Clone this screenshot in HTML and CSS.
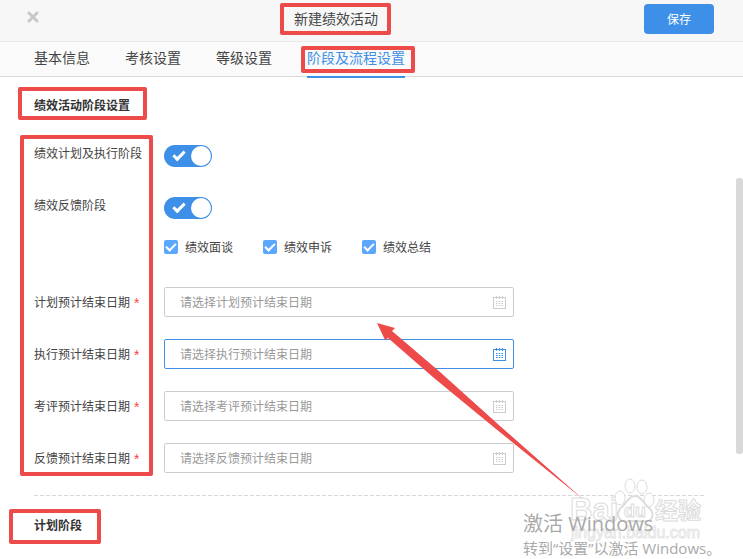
FILE: index.html
```html
<!DOCTYPE html>
<html lang="zh-CN">
<head>
  <meta charset="UTF-8">
  <meta name="viewport" content="width=device-width, initial-scale=1.0">
  <title>新建绩效活动</title>
  <link rel="stylesheet" href="styles.css">
</head>
<body>

  <header class="topbar">
    <button type="button" class="close-btn" aria-label="关闭">
      <svg width="12" height="12" viewBox="0 0 12 12"><path d="M2 2l8 8M10 2l-8 8" fill="none" stroke="#c8c8c8" stroke-width="3" stroke-linecap="round"/></svg>
    </button>
    <h1 class="page-title">新建绩效活动</h1>
    <button type="button" class="save-btn">保存</button>
  </header>

  <nav class="tabs">
    <a href="#" class="tab">基本信息</a>
    <a href="#" class="tab">考核设置</a>
    <a href="#" class="tab">等级设置</a>
    <a href="#" class="tab active">阶段及流程设置</a>
  </nav>

  <main class="content">
    <h2 class="section-title">绩效活动阶段设置</h2>

    <form class="stage-form">
      <!-- Stage switches -->
      <div class="row">
        <label class="row-label switch-label" for="plan-switch">绩效计划及执行阶段</label>
        <div class="switch-box"><input type="checkbox" id="plan-switch" class="switch" checked></div>
      </div>
      <div class="row row-feedback">
        <label class="row-label switch-label" for="feedback-switch">绩效反馈阶段</label>
        <div>
          <div class="switch-box"><input type="checkbox" id="feedback-switch" class="switch" checked></div>
          <div class="checks">
            <label class="check-item"><input type="checkbox" class="check" checked>绩效面谈</label>
            <label class="check-item"><input type="checkbox" class="check" checked>绩效申诉</label>
            <label class="check-item"><input type="checkbox" class="check" checked>绩效总结</label>
          </div>
        </div>
      </div>

      <!-- Date fields -->
      <div class="row">
        <label class="row-label" for="plan-date">计划预计结束日期<span class="required">*</span></label>
        <div class="date-box">
          <input type="text" id="plan-date" class="date-input" placeholder="请选择计划预计结束日期">
          <svg class="calendar" width="13" height="13"><use href="#calendar"/></svg>
        </div>
      </div>
      <div class="row">
        <label class="row-label" for="run-date">执行预计结束日期<span class="required">*</span></label>
        <div class="date-box current">
          <input type="text" id="run-date" class="date-input" placeholder="请选择执行预计结束日期">
          <svg class="calendar" width="13" height="13"><use href="#calendar"/></svg>
        </div>
      </div>
      <div class="row">
        <label class="row-label" for="review-date">考评预计结束日期<span class="required">*</span></label>
        <div class="date-box">
          <input type="text" id="review-date" class="date-input" placeholder="请选择考评预计结束日期">
          <svg class="calendar" width="13" height="13"><use href="#calendar"/></svg>
        </div>
      </div>
      <div class="row">
        <label class="row-label" for="back-date">反馈预计结束日期<span class="required">*</span></label>
        <div class="date-box">
          <input type="text" id="back-date" class="date-input" placeholder="请选择反馈预计结束日期">
          <svg class="calendar" width="13" height="13"><use href="#calendar"/></svg>
        </div>
      </div>
    </form>

    <hr class="divider">
    <h2 class="section-title">计划阶段</h2>
  </main>

  <div class="scroll-thumb"></div>

  <!-- Site watermark -->
  <svg class="watermark" width="140" height="70" viewBox="0 0 140 70">
    <g fill="#fff" stroke="#dcdcdc" stroke-width="1">
      <text x="1" y="42" class="wm-bai">Bai</text>
      <ellipse cx="51" cy="20" rx="5" ry="7"/>
      <ellipse cx="61" cy="8" rx="5" ry="7"/>
      <ellipse cx="73" cy="9" rx="5" ry="7"/>
      <ellipse cx="80" cy="22" rx="5" ry="7"/>
      <path d="M66 18c6 0 8 6 12 10 5 4 7 9 4 13-3 4-10 2-16 2s-12 2-15-2c-4-4-2-9 3-13 4-4 6-10 12-10z" stroke-width="2"/>
      <text x="55" y="39" class="wm-du">du</text>
      <text x="86" y="41" class="wm-cn">经验</text>
      <text x="2" y="60" class="wm-url">jingyan.baidu.com</text>
    </g>
  </svg>

  <!-- System activation notice -->
  <div class="activation">
    <p class="activation-title">激活 Windows</p>
    <p class="activation-text">转到“设置”以激活 Windows。</p>
  </div>

  <!-- Red marks -->
  <svg class="marks" width="743" height="559" viewBox="0 0 743 559">
    <g fill="none" stroke="#ed4a4a" stroke-width="4" stroke-linejoin="round">
      <rect x="282" y="5" width="107" height="28"/>
      <rect x="303" y="48" width="110" height="23"/>
      <rect x="20" y="89" width="125" height="29"/>
      <rect x="22" y="137" width="129" height="337"/>
      <rect x="11" y="511" width="88" height="31"/>
    </g>
    <path d="M377 323L395 328 392 331 440 372 500 426 584 500 496 429 434 378 388 338 385 340z" fill="#ed4a4a"/>
  </svg>

  <svg class="sprite" width="0" height="0">
    <symbol id="calendar" viewBox="0 0 13 13">
      <path d="M0 1h13v12H0zM1 2v10h11V2z" fill="currentColor" fill-rule="evenodd"/>
      <path d="M3 0h1v3H3zM6 0h1v3H6zM9 0h1v3H9z" fill="currentColor"/>
      <path d="M3 5.500h7M3 7.500h7M3 9.500h7" fill="none" stroke="currentColor" stroke-dasharray="1.600 1.100"/>
    </symbol>
  </svg>

</body>
</html>
```
FILE: styles.css
```css
*, *::before, *::after {
  box-sizing: border-box;
}

body {
  position: relative;
  min-height: 100vh;
  margin: 0;
  overflow: hidden;
  background: #fff;
  color: #444;
  font-family: "Noto Sans CJK SC", sans-serif;
  font-size: 12px;
  line-height: 20px;
}

button, input {
  font: inherit;
}

/* Header */
.topbar {
  display: flex;
  align-items: flex-start;
  height: 42px;
  padding: 4px 29px 0 27px;
  background: #f7f7f7;
  border-bottom: 1px solid #e8e8e8;
}

.close-btn {
  display: flex;
  padding: 7px 0;
  border: none;
  background: none;
  cursor: pointer;
}

.page-title {
  flex: 1;
  margin: 0;
  font-size: 14px;
  font-weight: 400;
  line-height: 28px;
  text-align: center;
}

.save-btn {
  width: 70px;
  height: 30px;
  margin-left: 11px;
  padding: 0;
  border: none;
  border-radius: 4px;
  background: #3d8fe8;
  color: #fff;
  cursor: pointer;
}

/* Tabs */
.tabs {
  display: flex;
  gap: 35px;
  height: 35px;
  padding: 0 34px;
  background: #fafafa;
  border-bottom: 1px solid #d9d9d9;
}

.tab {
  height: 36px;
  color: #444;
  font-size: 14px;
  line-height: 30px;
  text-decoration: none;
}

.tab.active {
  color: #3d8fe8;
  border-bottom: 2px solid #3d8fe8;
}

/* Form */
.content {
  padding: 18px 39px 24px 34px;
}

.section-title {
  margin: 0;
  color: #333;
  font-size: 12px;
  font-weight: 700;
  line-height: 20px;
}

.stage-form {
  display: flex;
  flex-direction: column;
  gap: 22px;
  margin: 26px 0 22px;
}

.row {
  display: flex;
  align-items: flex-start;
}

.row-feedback {
  padding-bottom: 8px;
}

.row-label {
  width: 130px;
  line-height: 30px;
}

.switch-label {
  line-height: 24px;
}

.required {
  margin-left: 4px;
  color: #f44;
  font-family: "Liberation Sans", sans-serif;
  font-size: 14px;
  line-height: 20px;
  vertical-align: -1px;
}

.switch-box {
  display: flex;
  align-items: center;
  height: 30px;
}

.switch {
  position: relative;
  width: 48px;
  height: 22px;
  margin: 0;
  appearance: none;
  border-radius: 11px;
  background: #ccc;
  cursor: pointer;
}

.switch:checked {
  background: #3d8fe8;
}

.switch::before {
  content: "";
  position: absolute;
  top: 1px;
  right: 1px;
  width: 20px;
  height: 20px;
  border-radius: 50%;
  background: #fff;
}

.switch::after {
  content: "";
  position: absolute;
  top: 6px;
  left: 9px;
  width: 12px;
  height: 7px;
  border: solid #fff;
  border-width: 0 0 3px 3px;
  transform: rotate(-45deg);
}

.checks {
  display: flex;
  gap: 30px;
  margin-top: 14px;
}

.check-item {
  display: flex;
  align-items: center;
  gap: 7px;
}

.check {
  position: relative;
  width: 14px;
  height: 14px;
  margin: 0;
  appearance: none;
  border-radius: 2px;
  background: #5ba7fd;
}

.check::after {
  content: "";
  position: absolute;
  top: 3px;
  left: 2px;
  width: 10px;
  height: 6px;
  border: solid #fff;
  border-width: 0 0 2px 2px;
  transform: rotate(-45deg);
}

.date-box {
  display: flex;
  flex: 0 1 350px;
  align-items: center;
  height: 30px;
  padding: 0 7px 0 15px;
  border: 1px solid #ccc;
  border-radius: 2px;
  color: #ccc;
}

.date-box.current {
  border-color: #3d8fe8;
  color: #3d8fe8;
}

.date-input {
  flex: 1;
  min-width: 0;
  height: 28px;
  padding: 0 0 2px;
  border: none;
  outline: none;
  background: none;
  color: #444;
}

.date-input::placeholder {
  color: #999;
}

.divider {
  height: 1px;
  margin: 0 0 19px;
  border: none;
  background: repeating-linear-gradient(90deg, #d9d9d9 0 4px, transparent 4px 6px);
}

/* Scroll bar */
.scroll-thumb {
  position: absolute;
  top: 178px;
  right: 0;
  width: 7px;
  height: 276px;
  border-radius: 3px;
  background: #d9d9d9;
}

/* Overlays */
.watermark {
  position: absolute;
  left: 569px;
  top: 478px;
  pointer-events: none;
}

.watermark text {
  font-family: "Liberation Sans", "Noto Sans CJK SC", sans-serif;
  font-weight: 700;
}

.watermark .wm-bai {
  font-size: 31px;
}

.watermark .wm-du {
  font-size: 18px;
}

.watermark .wm-cn {
  font-family: "Noto Sans CJK SC", sans-serif;
  font-size: 23px;
}

.watermark .wm-url {
  font-size: 16px;
  font-weight: 400;
  stroke: #e6e6e6;
}

.activation {
  position: absolute;
  left: 523px;
  top: 510px;
  color: #a9a9a9;
  font-family: "Open Sans", "Noto Sans CJK SC", sans-serif;
  white-space: nowrap;
}

.activation p {
  margin: 0;
}

.activation-title {
  font-size: 20px;
  line-height: 28px;
}

.activation-text {
  font-size: 15px;
  line-height: 20px;
}

.marks {
  position: absolute;
  left: 0;
  top: 0;
  pointer-events: none;
}

.sprite {
  position: absolute;
}
```
